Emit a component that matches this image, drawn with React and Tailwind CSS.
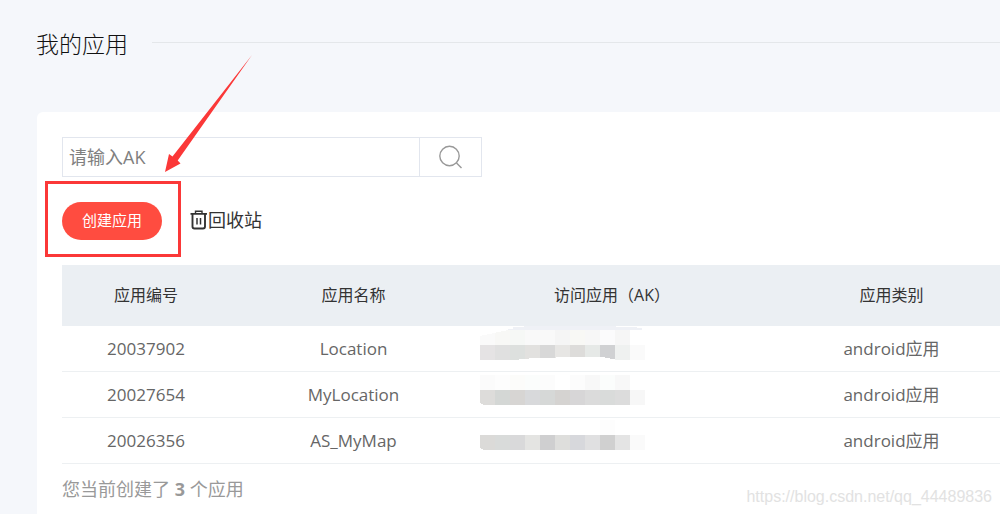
import React from "react";

const apps = [
  {
    id: "20037902",
    name: "Location",
    type: "android应用",
    mask: {
      y: 4,
      top: ["#fafafa", "#f8f8f6", "#f6f8f6", "#f9f9f9", "#f9f9f9", "#f5f5f5", "#f8f8f5", "#f7f7f7", "#fbfbfc", "#f6f6f6", "#ffffff"],
      bottom: ["#e5e3e4", "#e0e0e0", "#dde0de", "#e2e1df", "#d8d8d8", "#e7e6e4", "#dddcda", "#e6e9e7", "#d0d1d3", "#eff1f0", "#fafafa"],
    },
  },
  {
    id: "20027654",
    name: "MyLocation",
    type: "android应用",
    mask: {
      y: 3,
      top: ["#fbfbfb", "#fdfdfd", "#fcfcfa", "#fbfdfc", "#fcfcfc", "#ffffff", "#fcfcfc", "#f8f8f8", "#fbfdfc", "#f8f8f8", "#ffffff"],
      bottom: ["#dddcda", "#d4d7d5", "#d7d5d3", "#d8d9db", "#d6d8d7", "#d5d3d1", "#d7d6d7", "#dbdbdb", "#d9dbda", "#dcdcdc", "#f7f7f7"],
    },
  },
  {
    id: "20026356",
    name: "AS_MyMap",
    type: "android应用",
    mask: {
      y: 2,
      top: ["#ffffff", "#ffffff", "#ffffff", "#ffffff", "#ffffff", "#ffffff", "#ffffff", "#ffffff", "#fdfdfd", "#ffffff", "#ffffff"],
      bottom: ["#dbdad8", "#d9dbda", "#d9d9da", "#e4e4e2", "#cfcfd0", "#dededc", "#d7d8dc", "#e0e0e1", "#d0d0d0", "#e4e4e4", "#fafafa"],
    },
  },
];

function MaskedKey({ mask, first }) {
  return (
    <svg width="165" height="36" viewBox="0 0 165 36" className="block" shapeRendering="crispEdges" role="img" aria-label="AK">
      {first && <path d="M28 4V3H33V1H44V0H136V1H157V2H162V4Z" fill="#eff1f6" />}
      {mask.top.map((c, i) => (
        <rect key={i} x={i * 15} y={mask.y} width="15" height="15" fill={c} />
      ))}
      {first && <path d="M0 4H28L0 10Z" fill="#fff" />}
      {mask.bottom.map((c, i) => (
        <rect key={i} x={i * 15} y={mask.y + 15} width="15" height="15" fill={c} />
      ))}
      {first ? (
        <path d="M39 34V33H49V32H76V31H125V32H130V33H135V34Z" fill="#fff" />
      ) : (
        <path d="M0 28H1V29H3V30H0Z" transform={`translate(0 ${mask.y})`} fill="#fff" />
      )}
    </svg>
  );
}

function TrashIcon() {
  return (
    <svg width="18" height="20" viewBox="0 0 18 20" fill="none" stroke="#333" aria-hidden="true">
      <path d="M0.500 3.800H17" strokeWidth="1.800" />
      <path d="M5.500 3.500V1.200H12V3.500" strokeWidth="1.400" />
      <path d="M2.500 4V16.500Q2.500 18.500 4.500 18.500H13Q15 18.500 15 16.500V4" strokeWidth="1.900" />
      <path d="M7 8V14.500M10.500 8V14.500" strokeWidth="1.500" />
    </svg>
  );
}

export default function App() {
  return (
    <div className="relative min-h-screen overflow-hidden bg-[#f5f7fb] pl-9 font-['Open_Sans','Noto_Sans_CJK_SC',sans-serif] text-[#333]">
      <header className="flex h-28 items-start pt-6">
        <h1 className="text-[23px] leading-10 font-light text-[#111]">我的应用</h1>
        <div className="mt-[18px] ml-6 h-px flex-1 bg-[#e4e7ea]" />
      </header>

      <main className="ml-px overflow-hidden rounded-tl-md bg-white pt-[25px] pb-3 pl-[25px]">
        <form className="flex h-10 w-[420px] border border-[#e2e6ee]" onSubmit={(e) => e.preventDefault()}>
          <input
            aria-label="AK"
            placeholder="请输入AK"
            className="min-w-0 flex-1 px-1.5 text-lg outline-none placeholder:text-[#808080]"
          />
          <button type="submit" aria-label="搜索" className="flex w-[62px] items-center justify-center border-l border-[#e2e6ee]">
            <svg width="24" height="24" viewBox="0 0 24 24" fill="none" stroke="#999" strokeWidth="1.400" aria-hidden="true">
              <circle cx="10.500" cy="11" r="9.700" />
              <path d="M17.500 18L22.500 23" />
            </svg>
          </button>
        </form>

        <div className="flex items-center gap-7 pt-[25px] pb-[25px]">
          <button type="button" className="h-[38px] w-[100px] rounded-full bg-[#ff4c40] pb-px text-[15px] text-white">
            创建应用
          </button>
          <a href="#recycle" className="flex items-center pb-0.5 text-lg">
            <TrashIcon />
            <span>回收站</span>
          </a>
        </div>

        <table className="w-full min-w-[974px] table-fixed border-separate border-spacing-0 text-center">
          <colgroup>
            <col className="w-[168px]" />
            <col className="w-[247px]" />
            <col className="w-[270px]" />
            <col />
          </colgroup>
          <thead>
            <tr className="h-[61px] bg-[#ebeff3] text-base">
              <th className="p-0 pb-0.5 font-normal">应用编号</th>
              <th className="p-0 pb-0.5 font-normal">应用名称</th>
              <th className="p-0 pb-0.5 font-normal">访问应用（AK）</th>
              <th className="p-0 pb-0.5 font-normal">应用类别</th>
            </tr>
          </thead>
          <tbody>
            {apps.map((app, i) => (
              <tr key={app.id} className="h-[46px] text-[17px] text-[#666]">
                <td className="border-b border-[#edf0f2] p-0">{app.id}</td>
                <td className="border-b border-[#edf0f2] p-0">{app.name}</td>
                <td className="border-b border-[#edf0f2] p-0 pl-[3px] align-top">
                  <MaskedKey mask={app.mask} first={i === 0} />
                </td>
                <td className="border-b border-[#edf0f2] p-0">{app.type}</td>
              </tr>
            ))}
          </tbody>
        </table>

        <p className="pt-[11px] text-lg text-[#999]">
          您当前创建了 <b className="font-bold">3</b> 个应用
        </p>
      </main>

      <div className="absolute top-[181px] left-[45px] h-[76px] w-[136px] border-3 border-[#fb3838]" />
      <svg className="absolute top-[54px] left-[164px]" width="90" height="120" viewBox="0 0 90 120" aria-hidden="true">
        <path d="M88 1L13.700 106.500L16.500 109.500L1 118L5 100L8.500 102.500Z" fill="#fb3838" />
      </svg>
      <span className="absolute right-2 bottom-1.5 font-['Liberation_Sans',sans-serif] text-base text-[#e2e2e2]">
        https://blog.csdn.net/qq_44489836
      </span>
    </div>
  );
}
